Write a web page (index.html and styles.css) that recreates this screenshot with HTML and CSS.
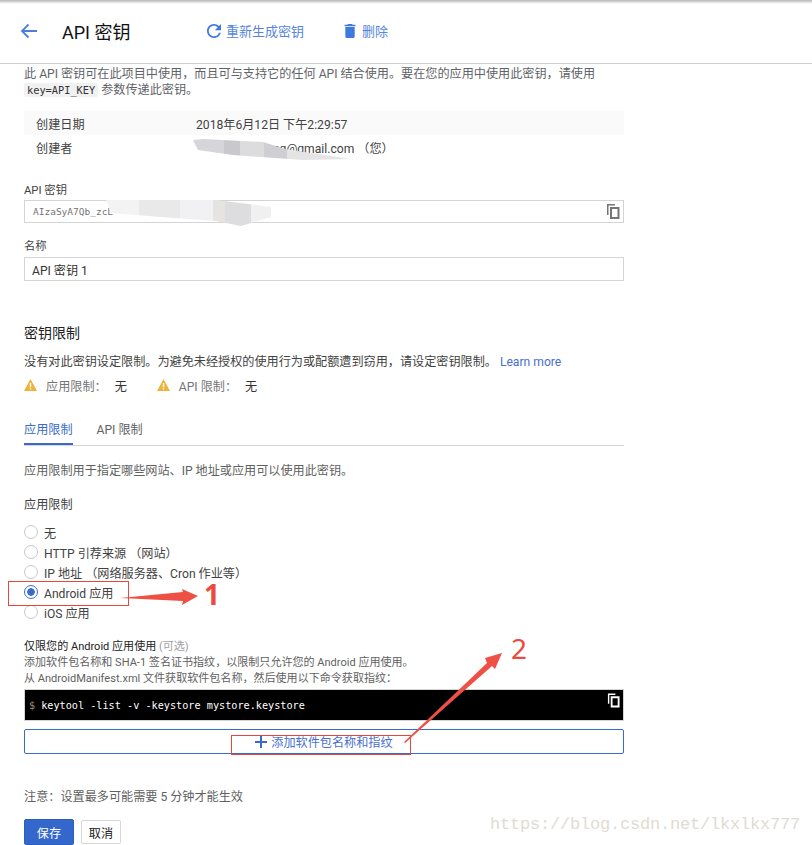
FILE: index.html
```html
<!DOCTYPE html>
<html lang="zh-CN">
<head>
<meta charset="utf-8">
<title>API 密钥</title>
<link rel="stylesheet" href="styles.css">
</head>
<body>
<div class="topshade"></div>
<header class="header">
  <svg class="back" width="18" height="16" viewBox="0 0 18 16"><path d="M17 8H2M8.5 1.5 2 8l6.500 6.500" fill="none" stroke="#4a7fe0" stroke-width="1.800"/></svg>
  <h1 class="title">API 密钥</h1>
  <div class="action act-regen">
    <svg width="14" height="14" viewBox="4 4 16 16"><path fill="#3f78de" d="M17.650 6.350A7.958 7.958 0 0 0 12 4C7.580 4 4.010 7.580 4.010 12S7.580 20 12 20c3.730 0 6.840-2.550 7.730-6h-2.080A5.990 5.990 0 0 1 12 18c-3.310 0-6-2.690-6-6s2.690-6 6-6c1.660 0 3.140.69 4.220 1.780L13 11h7V4l-2.350 2.350z"/></svg>
    <span>重新生成密钥</span>
  </div>
  <div class="action act-del">
    <svg width="12" height="14" viewBox="5 3 14 18"><path fill="#3f78de" d="M6 19c0 1.100.9 2 2 2h8c1.100 0 2-.9 2-2V7H6v12zM19 4h-3.500l-1-1h-5l-1 1H5v2h14V4z"/></svg>
    <span>删除</span>
  </div>
</header>

<main class="main">
  <p class="desc">此 API 密钥可在此项目中使用，而且可与支持它的任何 API 结合使用。要在您的应用中使用此密钥，请使用<br><code class="kbd">key=API_KEY</code> 参数传递此密钥。</p>

  <div class="info">
    <div class="info-row shaded"><span class="info-k">创建日期</span><span>2018年6月12日 下午2:29:57</span></div>
    <div class="info-row"><span class="info-k">创建者</span><span class="creator">ag@gmail.com （您）</span></div>
  </div>

  <label class="label label-key">API 密钥</label>
  <div class="field field-key">
    <span>AIzaSyA7Qb_zcL</span>
    <svg class="copy" width="14" height="15" viewBox="0 0 14 15"><path fill="#757575" d="M1 0h8v1.500H2.500V11H1z"/><path fill="#757575" fill-rule="evenodd" d="M4 3h9.500v12H4zm2 2v8h5.500V5z"/></svg>
  </div>

  <label class="label label-name">名称</label>
  <div class="field field-name">API 密钥 1</div>

  <h2 class="section">密钥限制</h2>
  <p class="restrict">没有对此密钥设定限制。为避免未经授权的使用行为或配额遭到窃用，请设定密钥限制。 <a class="more">Learn more</a></p>
  <div class="warns">
    <svg width="13" height="12" viewBox="0 0 13 12"><path fill="#efb23c" d="M6.500 0 13 12H0zM5.800 4v4.200h1.400V4zm0 5.200v1.400h1.400V9.200z" fill-rule="evenodd"/></svg>
    <span class="warn-k">应用限制：</span><span class="warn-v">无</span>
    <svg class="warn2" width="13" height="12" viewBox="0 0 13 12"><path fill="#efb23c" d="M6.500 0 13 12H0zM5.800 4v4.200h1.400V4zm0 5.200v1.400h1.400V9.200z" fill-rule="evenodd"/></svg>
    <span class="warn-k">API 限制：</span><span class="warn-v">无</span>
  </div>

  <nav class="tabs">
    <span class="tab active">应用限制</span>
    <span class="tab">API 限制</span>
  </nav>

  <p class="tabdesc">应用限制用于指定哪些网站、IP 地址或应用可以使用此密钥。</p>
  <div class="group-title">应用限制</div>
  <ul class="radios">
    <li><i class="radio"></i>无</li>
    <li><i class="radio"></i>HTTP 引荐来源 （网站）</li>
    <li><i class="radio"></i>IP 地址 （网络服务器、Cron 作业等）</li>
    <li><i class="radio on"></i>Android 应用</li>
    <li><i class="radio"></i>iOS 应用</li>
  </ul>

  <div class="only">仅限您的 Android 应用使用 <span class="opt">(可选)</span></div>
  <p class="note">添加软件包名称和 SHA-1 签名证书指纹，以限制只允许您的 Android 应用使用。<br>从 AndroidManifest.xml 文件获取软件包名称，然后使用以下命令获取指纹：</p>
  <div class="cmd">
    <span class="dollar">$</span><span class="cmd-text">keytool -list -v -keystore mystore.keystore</span>
    <svg class="copy-w" width="13" height="15" viewBox="0 0 14 15"><path fill="#fff" d="M1 0h8v1.500H2.500V11H1z"/><path fill="#fff" fill-rule="evenodd" d="M4 3h9.500v12H4zm2 2v8h5.500V5z"/></svg>
  </div>
  <button class="add"><svg width="12" height="12" viewBox="0 0 12 12"><path fill="#3a6bcc" d="M5 0h2v5h5v2H7v5H5V7H0V5h5z"/></svg>添加软件包名称和指纹</button>

  <p class="footnote">注意：设置最多可能需要 5 分钟才能生效</p>
  <div class="buttons">
    <button class="save">保存</button>
    <button class="cancel">取消</button>
  </div>
</main>

<!-- screenshot blurs and annotations lying over the page -->
<div class="smear smear1"></div>
<div class="smear smear2"></div>
<div class="redbox box1"></div>
<div class="redbox box2"></div>
<svg class="arrows" width="812" height="845" viewBox="0 0 812 845">
  <path fill="#ee5045" d="M120 598 183 592 182 589 198 596 182 605 183 601Z"/>
  <path fill="#ee5045" d="M404 742 487 663 485 658 502 653 495 669 492 666 405 743Z"/>
</svg>
<span class="num num1">1</span>
<span class="num num2">2</span>
<span class="watermark">https://blog.csdn.net/lkxlkx777</span>
</body>
</html>
```
FILE: styles.css
```css
* { box-sizing: border-box; }
html, body { margin: 0; padding: 0; }
body {
  position: relative;
  width: 812px;
  height: 845px;
  overflow: hidden;
  background: #fff;
  font-family: Roboto, "Noto Sans CJK SC", sans-serif;
  font-size: 12.130px;
  color: #212121;
}
.topshade { height: 4px; background: linear-gradient(#b5b5b5, #f4f4f4 80%, #fff); }
.header {
  height: 60px;
  border-bottom: 1px solid #d0d0d0;
  display: flex;
  align-items: center;
  padding: 0 0 6px 20px;
}
.title { margin: 0 0 0 24px; width: 145px; font-size: 18px; font-weight: 400; color: #111; }
.action { display: flex; align-items: center; gap: 5px; font-size: 13px; color: #5585dc; }
.act-regen { width: 137px; }
.act-del { gap: 6px; }
.main { padding: 0 0 0 24px; width: 624px; }
.desc { margin: 2px 0 0; line-height: 16px; color: #5f6368; }
.kbd { font-family: "DejaVu Sans Mono", monospace; font-size: 10.300px; background: #f1f1f1; color: #333; padding: 1px 3px; border-radius: 2px; }
.info { margin-top: 13px; }
.info-row { height: 24px; display: flex; align-items: center; color: #424242; }
.info-row.shaded { background: #fafafa; }
.info-k { width: 172px; padding-left: 12px; }
.creator { white-space: nowrap; padding-left: 77px; }
.label { display: block; font-size: 11.300px; line-height: 14px; color: #424242; }
.label-key { margin-top: 25px; }
.label-name { margin-top: 17px; }
.field { position: relative; border: 1px solid #d4d4d4; display: flex; align-items: center; }
.field-key { height: 23px; margin-top: 2px; padding-left: 8px; font-family: "DejaVu Sans Mono", monospace; font-size: 9.500px; color: #757575; }
.field-name { height: 24px; margin-top: 3px; padding-left: 7px; font-size: 12.130px; color: #333; }
.copy { position: absolute; right: 3px; top: 3px; }
.section { margin: 43px 0 0; font-size: 14px; line-height: 18px; font-weight: 400; color: #212121; }
.restrict { margin: 12px 0 0; line-height: 16px; color: #424242; white-space: nowrap; }
.more { color: #4a6fd0; }
.warns { display: flex; align-items: center; margin-top: 7px; height: 16px; color: #757575; }
.warn-k { margin-left: 9px; }
.warn-v { margin-left: 8px; color: #333; }
.warn2 { margin-left: 30px; }
.tabs { display: flex; gap: 24px; margin-top: 29px; border-bottom: 1px solid #d4d4d4; height: 24px; }
.tab { color: #616161; line-height: 16px; height: 23px; }
.tab.active { color: #3a6bcc; border-bottom: 2px solid #3a6bcc; }
.tabdesc { margin: 17px 0 0; line-height: 16px; color: #616161; }
.group-title { margin-top: 18px; line-height: 16px; color: #424242; }
.radios { list-style: none; margin: 9px 0 0; padding: 0; }
.radios li { height: 20px; display: flex; align-items: center; gap: 6px; color: #424242; white-space: nowrap; }
.radio { display: block; width: 14px; height: 14px; border: 1px solid #c8c8c8; border-radius: 50%; }
.radio.on { border-color: #3a6bcc; background: radial-gradient(circle, #3a6bcc 0 3.500px, #fff 4px); }
.only { margin-top: 18px; font-size: 11.050px; line-height: 14px; color: #212121; }
.opt { color: #9e9e9e; }
.note { margin: 1px 0 0; font-size: 11.050px; line-height: 16px; color: #616161; }
.cmd {
  position: relative;
  height: 32px;
  margin-top: 2px;
  padding: 0 0 0 4px;
  display: flex;
  align-items: center;
  gap: 6px;
  background: #000;
  border: 1px solid #d4d4d4;
  color: #fff;
  font-family: "DejaVu Sans Mono", monospace;
  font-size: 10.200px;
}
.dollar { color: #9e8f6a; }
.cmd-text { white-space: nowrap; }
.copy-w { position: absolute; right: 3px; top: 3px; }
.add {
  display: flex;
  align-items: center;
  justify-content: center;
  gap: 4px;
  width: 100%;
  height: 25px;
  margin-top: 8px;
  padding: 0;
  background: #fff;
  border: 1px solid #3a6bcc;
  border-radius: 2px;
  color: #4a6fd0;
  font: inherit;
}
.footnote { margin: 35px 0 0; line-height: 16px; color: #616161; }
.buttons { display: flex; gap: 7px; margin-top: 14px; align-items: center; }
.save { width: 50px; height: 26px; background: #3367cc; border: 1px solid #2f5fbd; border-radius: 2px; color: #fff; font: inherit; }
.cancel { width: 40px; height: 24px; background: #fff; border: 1px solid #d6d6d6; border-radius: 2px; color: #212121; font: inherit; }

.smear { position: absolute; filter: blur(.6px); }
.smear1 {
  left: 193px; top: 138px; width: 157px; height: 23px;
  background:
    linear-gradient(90deg, #d6d6da 0 20%, #c9c9cd 20% 30%, #dcdcde 30% 45%, #cfcfd3 45% 60%, #e4e4e4 60% 100%);
  clip-path: polygon(0 2px, 10px 1px, 70px 4px, 92px 11px, 157px 21px, 110px 22px, 40px 17px, 5px 12px);
}
.smear2 {
  left: 106px; top: 199px; width: 165px; height: 28px;
  background:
    linear-gradient(90deg, #f3f3f3 0 20%, #e9e9e9 20% 45%, #f1f1f4 45% 65%, #e6e4e0 65% 72%, #dddddf 72% 88%, #f0f0f0 88% 100%);
  clip-path: polygon(0 1px, 110px 1px, 165px 8px, 165px 18px, 135px 27px, 110px 22px, 55px 18px, 5px 14px);
}
.redbox { position: absolute; border: 1px solid #e8453c; }
.box1 { left: 8px; top: 581px; width: 121px; height: 25px; }
.box2 { left: 231px; top: 735px; width: 180px; height: 20px; }
.arrows { position: absolute; left: 0; top: 0; }
.num { position: absolute; color: #ec4a40; font-family: "Noto Sans", sans-serif; font-size: 28px; line-height: 22px; }
.num1 { left: 204px; top: 583px; font-weight: 700; }
.num2 { left: 511px; top: 637px; }
.watermark { position: absolute; left: 490px; top: 813px; font-family: "Liberation Mono", monospace; font-size: 17px; line-height: 24px; letter-spacing: -.2px; color: #dedcd4; white-space: nowrap; }
```
